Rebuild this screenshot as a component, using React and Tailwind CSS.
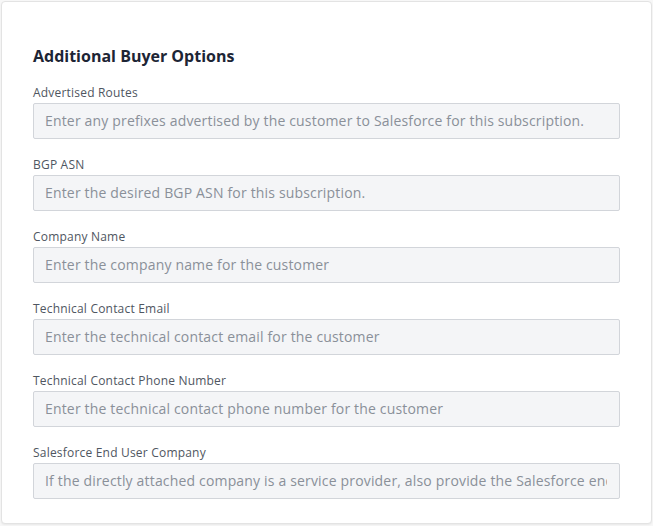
export default function App() {
  const fields = [
    ["Advertised Routes", "Enter any prefixes advertised by the customer to Salesforce for this subscription."],
    ["BGP ASN", "Enter the desired BGP ASN for this subscription."],
    ["Company Name", "Enter the company name for the customer"],
    ["Technical Contact Email", "Enter the technical contact email for the customer"],
    ["Technical Contact Phone Number", "Enter the technical contact phone number for the customer"],
    ["Salesforce End User Company", "If the directly attached company is a service provider, also provide the Salesforce end user company name."],
  ];
  const ff = { fontFamily: "'Open Sans', Lato, sans-serif" };
  return (
    <div className="w-[653px] h-[526px] bg-[#f7f7f7] p-px" style={ff}>
      <div className="h-[523px] bg-white border border-[#e3e3e3] rounded-[4px] shadow-[0_1px_2px_rgba(0,0,0,0.06)] pl-[31px] pr-[31px] pt-[43px]">
        <h2 className="text-[16px] leading-[22px] font-bold text-[#1d2535] mb-[19px]">Additional Buyer Options</h2>
        <div className="flex flex-col gap-[19px]">
          {fields.map(([label, ph]) => (
            <div key={label} className="flex flex-col">
              <label className="text-[12px] leading-[14px] tracking-[0.2px] text-[#4f5661] mb-[3px]">{label}</label>
              <input
                readOnly
                placeholder={ph}
                className="h-[36px] w-full bg-[#f4f5f7] border border-[#d2d5da] rounded-[2px] pl-[11px] pr-[12px] pb-[2px] text-[14px] tracking-[0.17px] text-[#333] placeholder:text-[#8a9099] outline-none"
                style={ff}
              />
            </div>
          ))}
        </div>
      </div>
    </div>
  );
}
